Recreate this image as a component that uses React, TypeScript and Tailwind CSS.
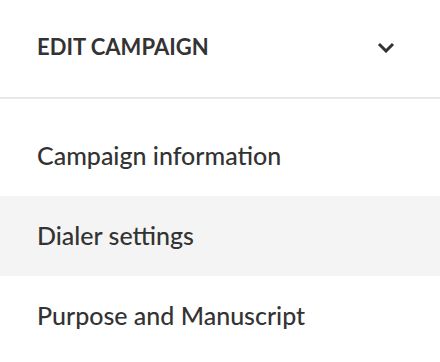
export default function App() {
  const items = ["Campaign information", "Dialer settings", "Purpose and Manuscript"];
  return (
    <div className="w-[440px] h-[362px] bg-white text-[#333333]" style={{ fontFamily: "Lato, 'Open Sans', sans-serif" }}>
      <div className="h-[99px] flex items-center justify-between pl-[37px] pr-[45px] pb-[4px] border-b-2 border-[#e8e8e8]">
        <span className="text-[22px] font-bold leading-none">EDIT CAMPAIGN</span>
        <svg width="18" height="11" viewBox="0 0 18 11" fill="none" className="mt-[2px]">
          <path d="M2 2 L9 9 L16 2" stroke="#333333" strokeWidth="3" />
        </svg>
      </div>
      <ul className="pt-[17px]">
        {items.map((item, i) => (
          <li
            key={item}
            className={`h-20 flex items-center pl-[37px] text-[25px] font-medium ${i === 1 ? "bg-[#f4f4f4]" : ""}`}
          >
            {item}
          </li>
        ))}
      </ul>
    </div>
  );
}
